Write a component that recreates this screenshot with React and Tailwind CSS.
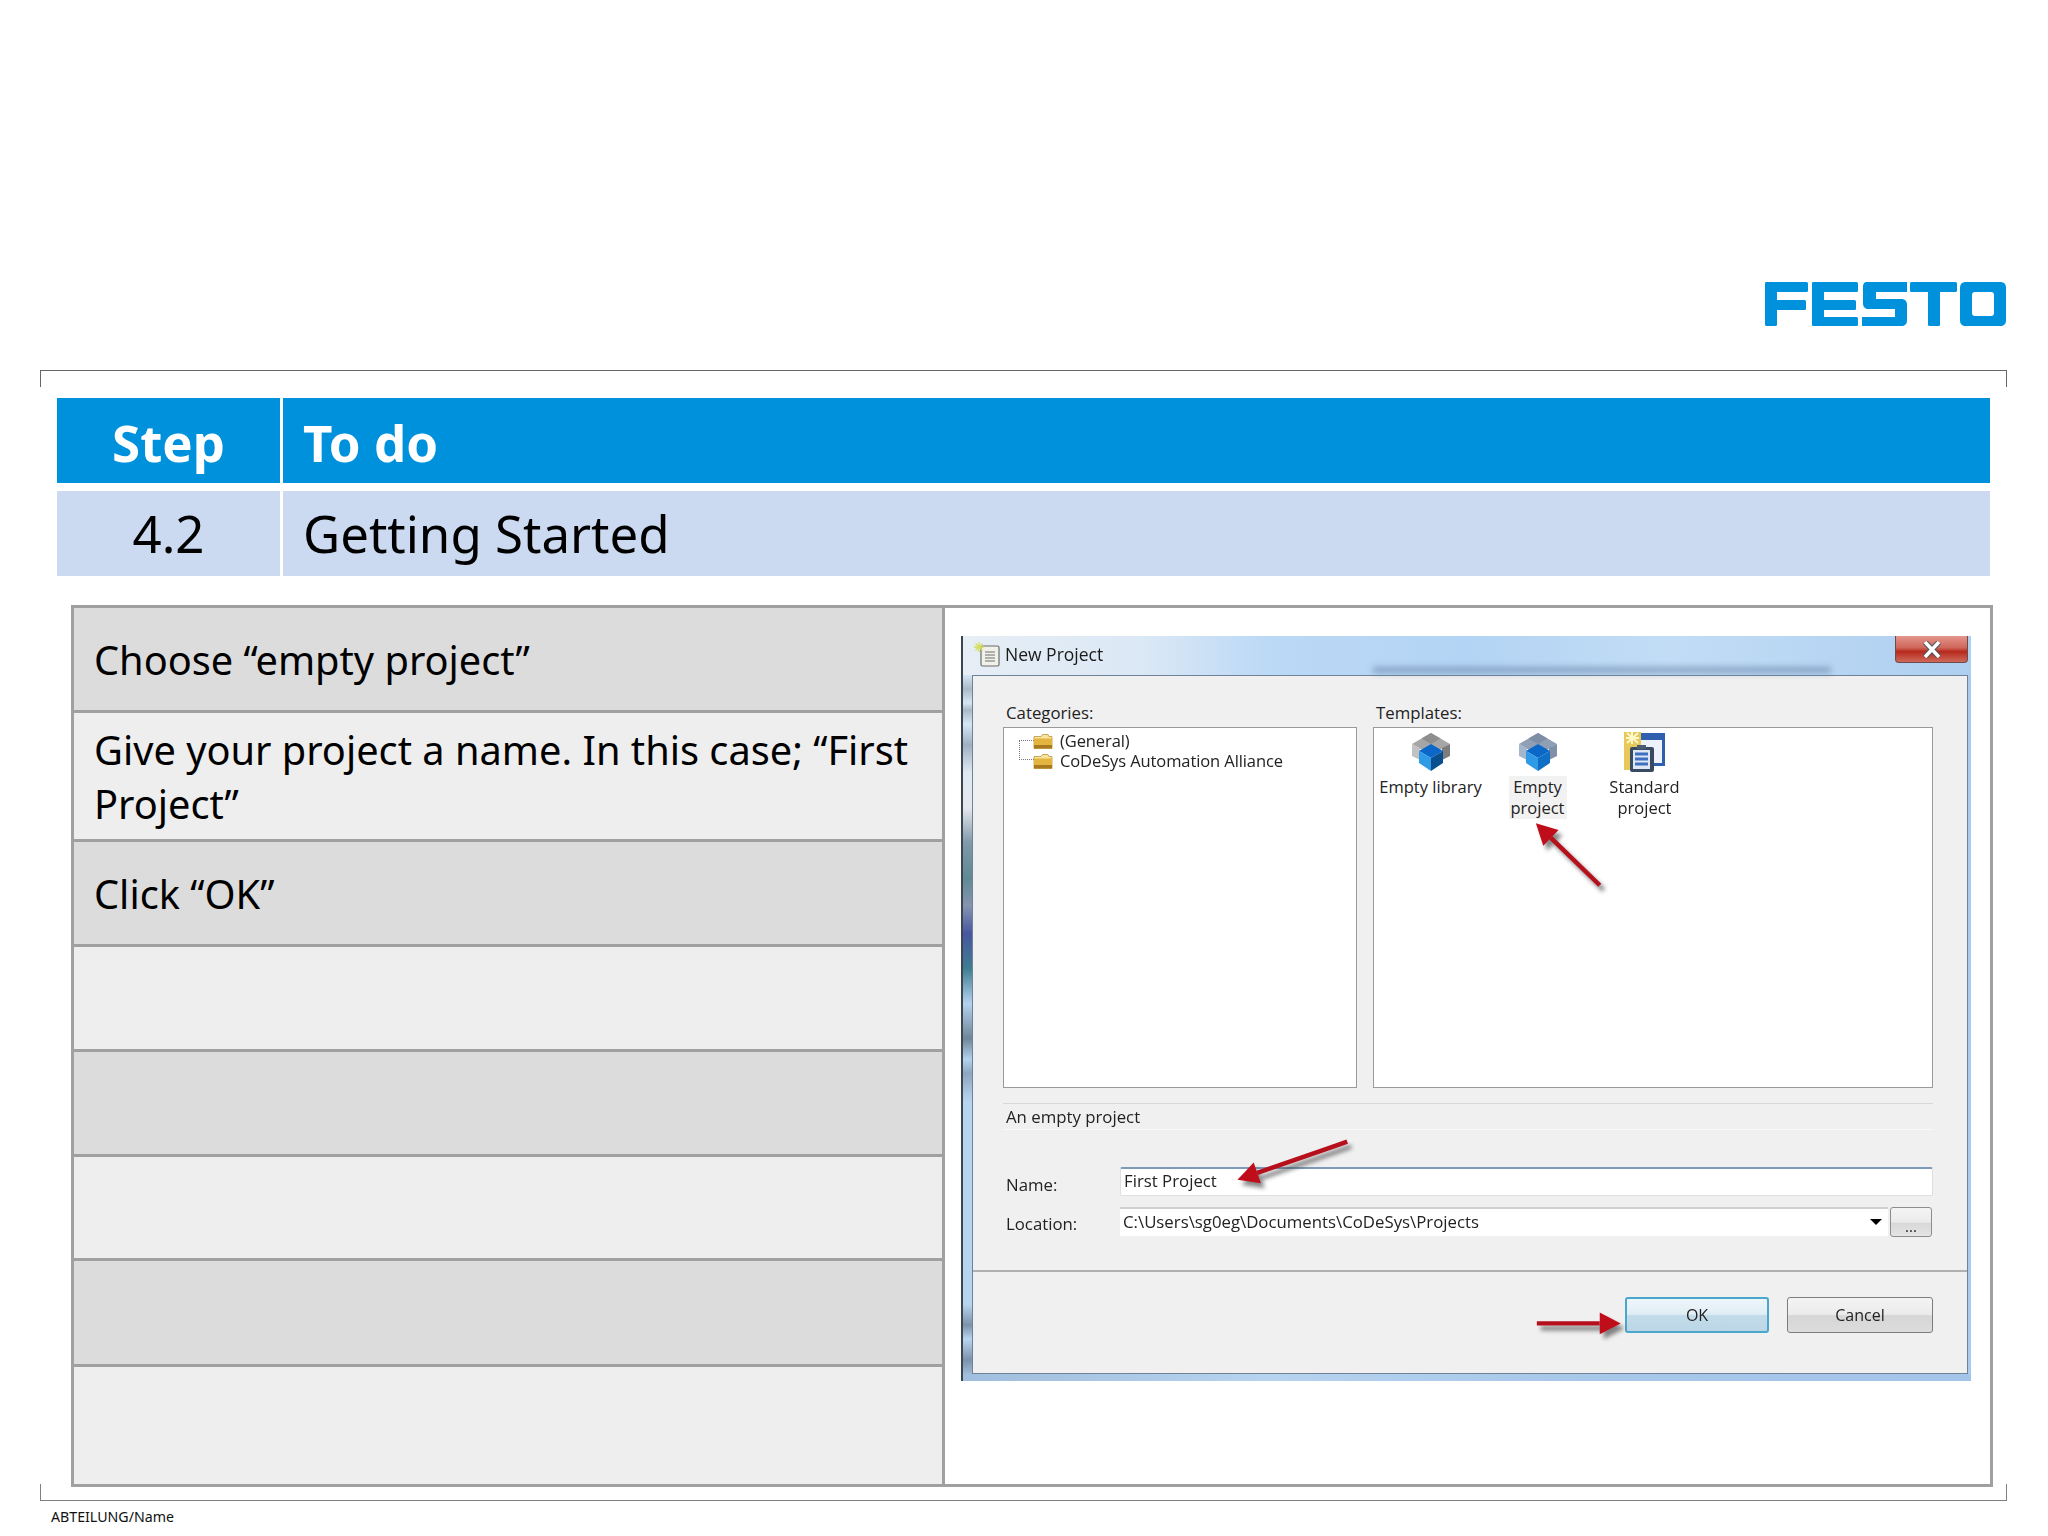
import React from "react";

const steps = [
  { h: "h-[105px]", text: "Choose “empty project”", dark: true },
  { h: "h-[129px]", text: "Give your project a name. In this case; “First Project”" },
  { h: "h-[105px]", text: "Click “OK”", dark: true },
  { h: "h-[105px]", text: "" },
  { h: "h-[105px]", text: "", dark: true },
  { h: "h-[104px]", text: "" },
  { h: "h-[106px]", text: "", dark: true },
  { h: "flex-1", text: "", last: true },
];

const FestoLogo = () => (
  <svg width="241" height="44" viewBox="0 0 241 44" fill="#0091dc">
    {/* F */}
    <rect x="0" y="0" width="43" height="10" rx="1.5" />
    <rect x="0" y="0" width="12" height="44" rx="1.5" />
    <rect x="0" y="18" width="41" height="10" rx="1.5" />
    {/* E */}
    <rect x="47" y="0" width="46" height="10" rx="1.5" />
    <rect x="47" y="0" width="12" height="44" rx="1.5" />
    <rect x="47" y="18" width="44" height="10" rx="1.5" />
    <rect x="47" y="35" width="46" height="9" rx="1.5" />
    {/* S */}
    <path d="M102 0H142V10H111V17H136C140 17 142 19 142 23V38C142 42 140 44 136 44H97V35H130V27H104C100 27 98 25 98 21V5C98 2 99 0 102 0Z" />
    {/* T */}
    <rect x="145" y="0" width="47" height="10" rx="1.5" />
    <rect x="163" y="0" width="12" height="44" rx="1.5" />
    {/* O */}
    <path
      fillRule="evenodd"
      d="M201 0H235C239 0 241 2 241 6V38C241 42 239 44 235 44H201C197 44 195 42 195 38V6C195 2 197 0 201 0ZM210 10C208 10 207 11 207 13V31C207 33 208 34 210 34H226C228 34 229 33 229 31V13C229 11 228 10 226 10Z"
    />
  </svg>
);

const Cube = ({ tint }) => (
  <svg width="38" height="38" viewBox="0 0 38 38">
    <path d="M19 0L38 11L19 22L0 11Z" fill={tint ? "#8f9fb5" : "#a6a6a6"} />
    <path d="M19 0L28.5 5.5L19 11L9.5 5.5Z" fill={tint ? "#7d8ea5" : "#8e8e8e"} />
    <path d="M0 11L8 15V27L0 23C-0.5 19 -0.5 15 0 11Z" fill={tint ? "#a5b5cb" : "#c2c2c2"} />
    <path d="M38 11L30 15V27L38 23Z" fill={tint ? "#7f90a8" : "#7d7d7d"} />
    <path d="M19 11L31 18L19 25L7 18Z" fill="#0b67c8" />
    <path d="M7 18L19 25V38L7 30Z" fill="#2f9be6" />
    <path d="M31 18L19 25V38L31 30Z" fill={tint ? "#0f6fc4" : "#0a4f8d"} />
  </svg>
);

const StandardIcon = () => (
  <svg width="42" height="40" viewBox="0 0 42 40">
    <rect x="10" y="1" width="31" height="33" fill="#2f5fae" />
    <rect x="13" y="8" width="25" height="23" fill="#eef3fa" />
    <rect x="0" y="0" width="17" height="38" fill="#e8c85a" />
    <path d="M8 0V12M2 6H15M3 1L14 11M14 1L3 11" stroke="#fff8c8" strokeWidth="2" />
    <rect x="6" y="15" width="24" height="25" rx="2" fill="#3a4a63" />
    <rect x="9" y="18" width="17" height="19" fill="#dfe7f4" />
    <rect x="13" y="13" width="9" height="4" fill="#4b5b74" />
    <path d="M11 22H24M11 27H24M11 32H24" stroke="#3f6fc0" strokeWidth="3" />
  </svg>
);

const Folder = () => (
  <svg width="20" height="15" viewBox="0 0 20 15">
    <path d="M1 2.5H8L9.5 0.5H15L16 2.5H19V14.5H1Z" fill="#f7e39a" stroke="#b08a35" strokeWidth="0.7" />
    <rect x="1" y="4.5" width="18" height="10" fill="#e3b440" />
    <rect x="1" y="11" width="18" height="3.5" fill="#a9791f" />
  </svg>
);

const DocIcon = () => (
  <svg width="26" height="25" viewBox="0 0 26 25">
    <rect x="7" y="4" width="18" height="20" rx="1.5" fill="#f1f1ec" stroke="#6d6d66" strokeWidth="1.2" />
    <path d="M11 10H21M11 13H21M11 16H21M11 19H21" stroke="#9a9a94" strokeWidth="1.4" />
    <path d="M5 0V10M0 5H10M1.5 1.5L8.5 8.5M8.5 1.5L1.5 8.5" stroke="#d4dd5c" strokeWidth="1.3" />
  </svg>
);

// the three red callouts that lie over the dialog
const Arrow = ({ x1, y1, x2, y2 }) => {
  const a = Math.atan2(y2 - y1, x2 - x1);
  const bx = x2 - Math.cos(a) * 21;
  const by = y2 - Math.sin(a) * 21;
  const nx = -Math.sin(a) * 11;
  const ny = Math.cos(a) * 11;
  const head = `${x2},${y2} ${bx + nx},${by + ny} ${bx - nx},${by - ny}`;
  return (
    <>
      <g transform="translate(4 5)" fill="#444" stroke="#444" opacity="0.65" filter="url(#soft)">
        <line x1={x1} y1={y1} x2={bx} y2={by} strokeWidth="4.5" />
        <polygon points={head} stroke="none" />
      </g>
      <line x1={x1} y1={y1} x2={bx} y2={by} stroke="#b5101c" strokeWidth="4.5" />
      <polygon points={head} fill="#c00d1a" />
    </>
  );
};

const Dialog = () => (
  <div className="relative w-[1010px] h-[745px] flex flex-col border-l-2 border-[#3d4650] blur-[0.4px] font-['Open_Sans',sans-serif] text-[16.8px] text-[#222]">
    {/* title bar */}
    <div className="relative h-[39px] flex items-center gap-[5px] pl-[11px] pb-[2px] bg-[linear-gradient(90deg,#e6eef6_0%,#dbe8f5_18%,#bcd9f6_30%,#b3d4f4_50%,#c2dcf5_70%,#b8d6f3_85%,#aecff0_100%)]">
      <DocIcon />
      <span className="text-[17.5px] text-[#1a1a1a]">New Project</span>
      <div className="absolute left-[410px] right-[140px] bottom-[2px] h-[6px] bg-[#6f8aaf] opacity-70 blur-[3px]" />
      <div className="absolute top-0 right-[3px] w-[73px] h-[27px] rounded-b-[4px] border border-t-0 border-[#6e4a48] bg-[linear-gradient(180deg,#e4968c_0%,#d0665a_45%,#b62a1c_60%,#cf6a5c_100%)] flex items-center justify-center">
        <svg width="20" height="17" viewBox="0 0 20 17">
          <path d="M3 1L17 16M17 1L3 16" stroke="#4a5560" strokeWidth="5.5" />
          <path d="M3 1L17 16M17 1L3 16" stroke="#fff" strokeWidth="3.5" />
        </svg>
      </div>
    </div>

    <div className="flex-1 flex min-h-0">
      <div className="w-[9px] bg-[linear-gradient(180deg,#d5e6f5_0%,#a9b9c8_2%,#d5e6f5_4%,#a9b9c8_5%,#d5e6f5_7%,#9fb0c2_10%,#dfe9f3_14%,#e4e8ee_19%,#7f99a8_24%,#5f8a94_29%,#8594b0_33%,#47579f_37%,#3f7d92_42%,#b3d2ee_47%,#6f8698_52%,#b3d2ee_55%,#8ea6bf_57%,#b8d5f0_61%,#b8d5f0_90%,#7c92aa_93%,#b8d5f0_95%,#7c92aa_98%,#9fbcd8_100%)]" />

      {/* client area */}
      <div className="flex-1 flex flex-col border border-[#6f8298] bg-[#f0f0f0] pt-[27px]">
        <div className="w-[990px] px-[30px]">
          <div className="grid grid-cols-[354px_560px] gap-x-[16px]">
            <div className="h-[24px] pl-[3px] leading-[20px]">Categories:</div>
            <div className="h-[24px] pl-[3px] leading-[20px]">Templates:</div>

            <div className="relative h-[361px] border-[1.5px] border-[#9a9a9a] bg-white pt-[3px] text-[16.5px] tracking-[-0.1px]">
              <div className="absolute left-[15px] top-[12px] w-[15px] h-[20px] border-l border-y border-dotted border-[#777]" />
              {["(General)", "CoDeSys Automation Alliance"].map((name) => (
                <div key={name} className="h-[20px] flex items-center pl-[29px] gap-[7px] leading-[20px]">
                  <Folder />
                  <span>{name}</span>
                </div>
              ))}
            </div>

            <div className="h-[361px] border-[1.5px] border-[#9a9a9a] bg-white pt-[4px] pl-[3px] flex items-start text-[16.5px]">
              <div className="w-[107px] flex flex-col items-center text-center leading-[21px]">
                <div className="h-[40px] flex items-center"><Cube /></div>
                <div className="mt-[4px] whitespace-nowrap">Empty library</div>
              </div>
              <div className="w-[107px] flex flex-col items-center text-center leading-[21px]">
                <div className="h-[40px] flex items-center"><Cube tint /></div>
                <div className="mt-[4px] w-[58px] pb-[1px] bg-[#f2f2f2]">Empty project</div>
              </div>
              <div className="w-[107px] flex flex-col items-center text-center leading-[21px]">
                <div className="h-[40px] flex items-center"><StandardIcon /></div>
                <div className="mt-[4px] w-[74px]">Standard project</div>
              </div>
            </div>
          </div>

          <div className="mt-[15px] h-[27px] flex items-center pl-[3px] pt-[1px] border-t border-[#d8d8d8] border-b-[#fafafa] border-b">An empty project</div>

          <div className="mt-[37px] flex">
            <div className="w-[117px] shrink-0 pl-[3px] pt-[8px] leading-[20px]">Name:</div>
            <div className="flex-1 h-[29px] flex items-center pl-[3px] pb-[2px] bg-white rounded-[2px] border border-[#dcdfe3] border-t-[#7d9ab8] border-t-2">First Project</div>
          </div>
          <div className="mt-[11px] flex">
            <div className="w-[117px] shrink-0 pl-[3px] pt-[7px] leading-[20px]">Location:</div>
            <div className="w-[768px] h-[29px] flex items-center justify-between pl-[3px] pb-[2px] pr-[6px] bg-white border-t-2 border-[#cfcfcf]">
              <span>C:\Users\sg0eg\Documents\CoDeSys\Projects</span>
              <span className="w-0 h-0 border-x-[6px] border-x-transparent border-t-[6px] border-t-black" />
            </div>
            <div className="ml-[2px] w-[42px] h-[30px] rounded-[3px] border border-[#8d8d8d] bg-[linear-gradient(180deg,#f4f4f4_0%,#ebebeb_50%,#d8d8d8_55%,#e4e4e4_100%)] flex items-end justify-center leading-[20px] text-[15px]">...</div>
          </div>
        </div>

        <div className="mt-[33px] flex-1 border-t-2 border-[#b0b0b0] flex justify-end gap-[18px] pt-[25px] pr-[34px]">
          <div className="w-[144px] h-[36px] rounded-[3px] border-2 border-[#4aa7cc] bg-[linear-gradient(180deg,#eef6fb_0%,#e0edf5_48%,#c3dcea_52%,#bcd6e6_100%)] flex items-center justify-center text-[16px]">OK</div>
          <div className="w-[146px] h-[36px] rounded-[3px] border border-[#7d7d7d] bg-[linear-gradient(180deg,#f4f4f4_0%,#ebebeb_48%,#d6d6d6_52%,#dcdcdc_100%)] flex items-center justify-center text-[16px]">Cancel</div>
        </div>
      </div>

      <div className="w-[3px] bg-[#a9cbed]" />
    </div>
    <div className="h-[7px] bg-[linear-gradient(90deg,#a0bedd_0%,#b6d3ef_30%,#a8c8ea_60%,#a3c5ea_100%)]" />

    <svg className="absolute inset-0 w-full h-full pointer-events-none" viewBox="-2 0 1010 745">
      <defs>
        <filter id="soft"><feGaussianBlur stdDeviation="2" /></filter>
      </defs>
      <Arrow x1={636} y1={249} x2={572} y2={187} />
      <Arrow x1={383} y1={506} x2={273} y2={544} />
      <Arrow x1={573} y1={688} x2={657} y2={688} />
    </svg>
  </div>
);

export default function App() {
  return (
    <div className="w-[2048px] h-[1536px] overflow-hidden bg-white text-black font-['Noto_Sans','Open_Sans',sans-serif] flex flex-col">
      <div className="h-[370px] flex justify-end pt-[282px] pr-[42px]">
        <FestoLogo />
      </div>

      <div className="ml-[40px] mr-[41px] h-[17px] border-t-[1.5px] border-x-[1.5px] border-[#666]" />

      {/* step table */}
      <div className="ml-[57px] w-[1933px] mt-[11px]">
        <div className="h-[85px] flex gap-[3px] text-white font-bold text-[51px]">
          <div className="w-[223px] bg-[#0091dc] flex items-center justify-center pt-[3px]">Step</div>
          <div className="flex-1 bg-[#0091dc] flex items-center pl-[20px] pt-[3px]">To do</div>
        </div>
        <div className="mt-[8px] h-[85px] flex gap-[3px] text-[51px]">
          <div className="w-[223px] bg-[#cbdaf0] flex items-center justify-center">4.2</div>
          <div className="flex-1 bg-[#cbdaf0] flex items-center pl-[20px]">Getting Started</div>
        </div>
      </div>

      {/* instructions and screenshot */}
      <div className="ml-[71px] w-[1922px] h-[882px] mt-[29px] border-[3px] border-[#a0a0a0] flex">
        <div className="w-[871px] shrink-0 flex flex-col border-r-[3px] border-[#a0a0a0]">
          {steps.map((s, i) => (
            <div
              key={i}
              className={`${s.h} ${s.dark ? "bg-[#dcdcdc]" : "bg-[#eeeeee]"} ${s.last ? "" : "border-b-[3px] border-[#a0a0a0]"} flex items-center px-[20px] pt-[2px] text-[39.75px] leading-[54px]`}
            >
              {s.text}
            </div>
          ))}
        </div>
        <div className="flex-1 pl-[16px] pt-[28px]">
          <Dialog />
        </div>
      </div>

      <div className="ml-[40px] mr-[41px] -mt-[3px] h-[17px] border-b-[1.5px] border-x-[1.5px] border-[#808080]" />
      <div className="ml-[51px] mt-[6px] text-[14.2px] leading-[20px] text-[#111]">ABTEILUNG/Name</div>
    </div>
  );
}
